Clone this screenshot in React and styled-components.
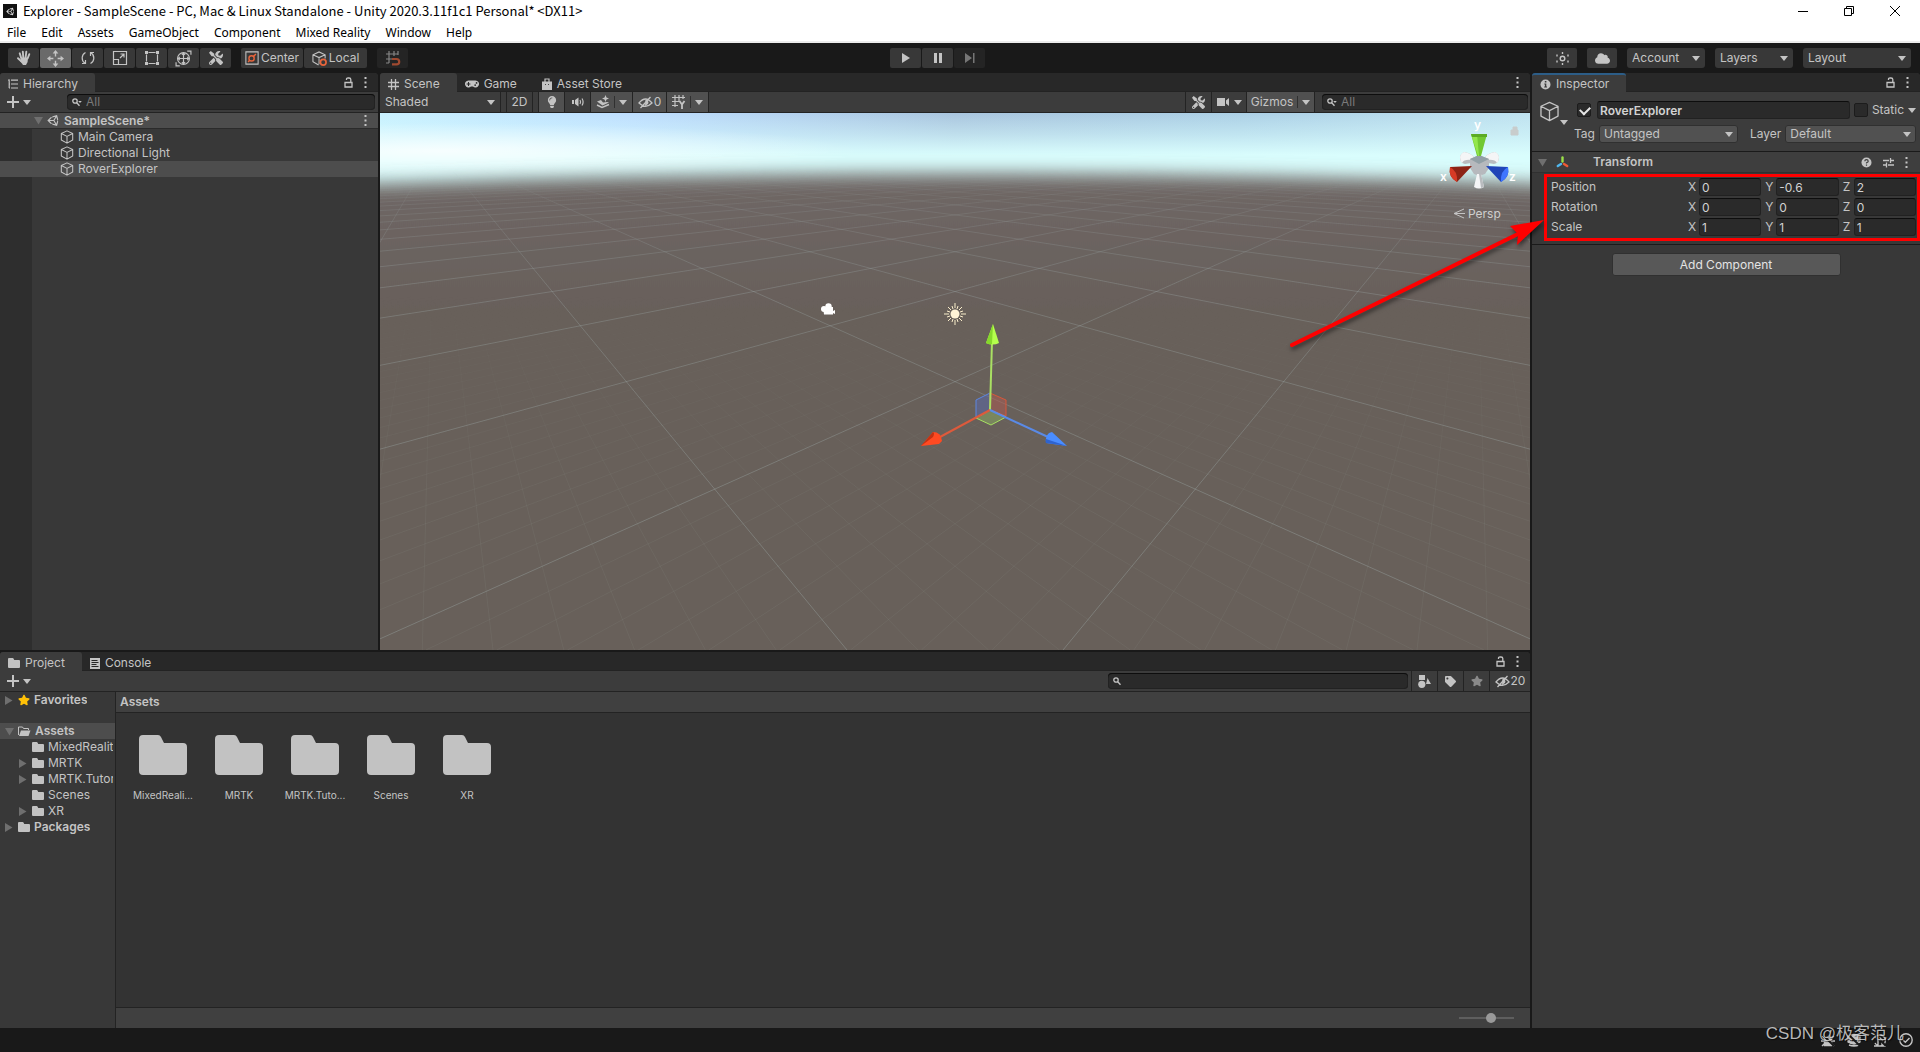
import React, { useState } from 'react';
import styled, { createGlobalStyle } from 'styled-components';
import { FaCloud, FaGamepad, FaLightbulb, FaStar, FaTag, FaTools, FaUnity } from 'react-icons/fa';

const GlobalStyle = createGlobalStyle`
  :root {
    --bg: #383838;
    --bg-dark: #191919;
    --bg-tabs: #282828;
    --bg-bar: #3c3c3c;
    --bg-field: #2a2a2a;
    --bg-active: #505050;
    --line: #232323;
    --text: #c4c4c4;
    --muted: #7a7a7a;
    --font: Inter, Roboto, "Liberation Sans", sans-serif;
    --font-title: "Noto Sans CJK SC", "Noto Sans", sans-serif;
    --font-menu: "Noto Sans", "Open Sans", sans-serif;
  }

  * { box-sizing: border-box; }

  body {
    margin: 0;
    overflow: hidden;
    background: var(--bg-dark);
  }

  button, input, select {
    font: inherit;
    color: inherit;
    margin: 0;
    padding: 0;
    border: 0;
    background: none;
    outline: none;
  }

  ul { list-style: none; margin: 0; padding: 0; }
  svg { display: block; flex-shrink: 0; }
`;

const Window = styled.div`
  display: flex;
  flex-direction: column;
  height: 100vh;
  background: var(--bg-dark);
  color: var(--text);
  font-family: var(--font);
  font-size: 12px;
  line-height: 16px;
`;

const TitleBar = styled.header`
  display: flex;
  align-items: center;
  height: 22px;
  padding: 0 2px 0 3px;
  background: #fff;
  color: #000;
  font-family: var(--font-title);
  font-size: 13px;
`;

const AppBadge = styled.span`
  display: flex;
  align-items: center;
  justify-content: center;
  width: 14px;
  height: 14px;
  margin-right: 6px;
  background: #111;
  color: #ddd;
`;

const WindowTitle = styled.span`
  flex: 1;
`;

const WindowButton = styled.button`
  display: flex;
  align-items: center;
  justify-content: center;
  width: 46px;
  height: 20px;
`;

const MenuBar = styled.nav`
  display: flex;
  gap: 15px;
  height: 21px;
  padding-left: 7px;
  background: #fff;
  border-bottom: 2px solid #ececec;
  color: #000;
  font-family: var(--font-menu);
`;

const MenuItem = styled.button`
  height: 20px;
  line-height: 20px;
  padding-top: 1px;
`;

const MainToolbar = styled.div`
  display: flex;
  align-items: center;
  height: 30px;
  padding: 0 9px 0 8px;
`;

const ToolSide = styled.div`
  flex: 1;
  display: flex;
  justify-content: ${props => (props.$end ? 'flex-end' : 'flex-start')};
  gap: 10px;
`;

const ButtonGroup = styled.div`
  display: flex;
  gap: 1px;
`;

const PlayControls = styled(ButtonGroup)`
  margin-right: 44px;
`;

const ToolButton = styled.button`
  display: flex;
  align-items: center;
  justify-content: center;
  gap: 2px;
  width: ${props => props.$width || 31}px;
  height: 20px;
  border-radius: 2px;
  background: ${props => (props.$active ? '#6a6a6a' : props.$dim ? '#242424' : '#383838')};
  color: ${props => (props.$dim ? '#767676' : '#c4c4c4')};
`;

const SelectBox = styled.span`
  position: relative;
  display: inline-flex;
  align-items: center;
  flex: ${props => (props.$grow ? '1 1 0' : '0 0 auto')};
  width: ${props => (props.$width ? `${props.$width}px` : 'auto')};
  min-width: 0;
  height: ${props => props.$height || 20}px;
  border-radius: ${props => (props.$flat ? 0 : 3)}px;
  background: ${props => (props.$flat ? 'transparent' : props.$raised ? '#515151' : '#383838')};
  box-shadow: ${props => (props.$raised ? 'inset 0 0 0 1px #303030' : 'none')};

  select {
    appearance: none;
    width: 100%;
    height: 100%;
    padding: 0 20px 0 5px;
  }

  svg {
    position: absolute;
    right: 5px;
    pointer-events: none;
  }
`;

const Workspace = styled.main`
  flex: 1;
  display: grid;
  grid-template-columns: minmax(0, 1fr) 388px;
  gap: 2px;
  min-height: 0;
`;

const LeftDock = styled.div`
  display: grid;
  grid-template-rows: minmax(0, 577fr) minmax(0, 376fr);
  gap: 2px;
  min-height: 0;
`;

const TopDock = styled.div`
  display: grid;
  grid-template-columns: 378px minmax(0, 1fr);
  gap: 2px;
  min-height: 0;
`;

const Panel = styled.section`
  display: flex;
  flex-direction: column;
  min-width: 0;
  min-height: 0;
  background: var(--bg);
  border-radius: 4px 4px 0 0;
`;

const TabStrip = styled.div`
  display: flex;
  height: 19px;
  flex-shrink: 0;
  background: var(--bg-tabs);
  border-bottom: 1px solid var(--line);
  border-radius: 4px 4px 0 0;
`;

const Tab = styled.button`
  display: flex;
  align-items: center;
  gap: 5px;
  height: 19px;
  padding: ${props => (props.$focused ? 1 : 3)}px 17px 0 8px;
  border-radius: 3px 3px 0 0;
  border-top: ${props => (props.$focused ? '2px solid #2c5d87' : '0')};
  background: ${props => (props.$active ? 'var(--bg-bar)' : 'transparent')};
`;

const TabActions = styled.div`
  display: flex;
  align-items: center;
  gap: 11px;
  margin-left: auto;
  padding-right: 11px;
`;

const IconButton = styled.button`
  display: flex;
  align-items: center;
  gap: 4px;
`;

const PanelBar = styled.div`
  display: flex;
  align-items: center;
  height: 21px;
  flex-shrink: 0;
  padding-left: ${props => props.$left || 0}px;
  background: var(--bg-bar);
  border-bottom: 1px solid var(--line);
`;

const BarButton = styled.button`
  display: flex;
  align-items: center;
  justify-content: center;
  gap: ${props => props.$gap || 1}px;
  width: ${props => props.$width || 26}px;
  height: 20px;
  border-left: 1px solid var(--line);
  background: ${props => (props.$active ? 'var(--bg-active)' : 'transparent')};
`;

const BarGap = styled.span`
  width: 6px;
  height: 20px;
  border-left: 1px solid var(--line);
`;

const Divider = styled.span`
  width: 1px;
  height: 12px;
  margin: 0 3px;
  background: #303030;
`;

const Spacer = styled.span`
  flex: 1;
  ${props => props.$edge && 'align-self: stretch; border-left: 1px solid var(--line);'}
`;

const SearchBox = styled.label`
  display: flex;
  align-items: center;
  gap: 4px;
  flex: 0 0 auto;
  width: ${props => props.$width}px;
  height: 16px;
  margin: 0 ${props => props.$gap || 3}px;
  padding-left: 5px;
  border-radius: 4px;
  background: var(--bg-field);
  box-shadow: inset 0 1px 0 #0d0d0d, inset 0 0 0 1px #222;

  input { flex: 1; min-width: 0; }
  input::placeholder { color: var(--muted); opacity: 1; }
`;

/* hierarchy */

const HierarchyList = styled.ul`
  flex: 1;
  background: linear-gradient(90deg, #2e2e2e 32px, var(--bg) 32px);
`;

const HierarchyRow = styled.li`
  display: flex;
  align-items: center;
  gap: 4px;
  height: 16px;
  padding: 0 11px 0 ${props => (props.$root ? 34 : 60)}px;
  font-weight: ${props => (props.$root ? 600 : 400)};
  background: ${props => (props.$root || props.$selected ? '#4d4d4d' : 'transparent')};
  border-bottom: ${props => (props.$root ? '1px solid #2b2b2b' : '0')};
`;

/* scene */

const SceneView = styled.div`
  position: relative;
  flex: 1;
  min-height: 0;
  overflow: hidden;

  > svg { width: 100%; height: 100%; }
`;

const OrientationGizmo = styled.div`
  position: absolute;
  top: 3px;
  right: 5px;
`;

/* inspector */

const ObjectHeader = styled.div`
  display: flex;
  gap: 8px;
  padding: 9px 4px 8px 7px;
  background: var(--bg-bar);
  border-bottom: 1px solid #1a1a1a;
`;

const ObjectIcon = styled.div`
  display: flex;
  align-items: flex-end;
  width: 26px;
  height: 24px;

  svg:first-child { align-self: flex-start; }
`;

const HeaderRows = styled.div`
  flex: 1;
  display: flex;
  flex-direction: column;
  gap: 6px;
`;

const HeaderRow = styled.div`
  display: flex;
  align-items: center;
  height: 18px;
  padding-left: ${props => (props.$indent ? 1 : 4)}px;
  gap: 4px;

  label { white-space: nowrap; }
`;

const LayerLabel = styled.label`
  padding-left: 8px;
`;

const Checkbox = styled.input.attrs({ type: 'checkbox' })`
  appearance: none;
  position: relative;
  flex-shrink: 0;
  width: 14px;
  height: 14px;
  border: 1px solid #1c1c1c;
  border-radius: 2px;
  background: var(--bg-field);

  &:checked::after {
    content: '';
    position: absolute;
    left: 2px;
    top: 2px;
    width: 8px;
    height: 5px;
    border: solid #e6e6e6;
    border-width: 0 0 2px 2px;
    transform: rotate(-45deg);
  }
`;

const TextField = styled.input`
  flex: 1;
  min-width: 0;
  height: 18px;
  padding: 0 2px;
  border: 1px solid #212121;
  border-top-color: #0d0d0d;
  border-radius: 3px;
  background: var(--bg-field);
  color: #d2d2d2;
  font-weight: ${props => (props.$bold ? 600 : 400)};
`;

const NameField = styled(TextField)`
  margin: 0 0 0 2px;
`;

const ComponentHeader = styled.div`
  display: flex;
  align-items: center;
  height: 21px;
  padding: 0 12px 0 6px;
  background: #3e3e3e;
  border-bottom: 1px solid #303030;
  font-weight: 600;
`;

const ComponentTitle = styled.span`
  flex: 1;
  padding-left: 24px;
`;

const TransformBody = styled.div`
  position: relative;
  padding: 4px 4px 7px 19px;
  border-bottom: 1px solid #1a1a1a;
`;

const VectorRow = styled.div`
  display: grid;
  grid-template-columns: 133px repeat(3, minmax(0, 1fr));
  column-gap: 4px;
  align-items: center;
  height: 20px;
`;

const AxisField = styled.label`
  display: flex;
  align-items: center;
  min-width: 0;

  span { width: 11px; }
`;

const AddRow = styled.div`
  display: flex;
  justify-content: center;
  padding: 8px 0;
`;

const AddButton = styled.button`
  width: 229px;
  height: 23px;
  border: 1px solid #303030;
  border-radius: 3px;
  background: #585858;
  color: #e4e4e4;
`;

const Highlight = styled.div`
  position: absolute;
  inset: 1px 0 3px 12px;
  border: 3px solid #fe0000;
  pointer-events: none;
`;

const Arrow = styled.svg`
  position: absolute;
  top: 36px;
  right: 376px;
  z-index: 5;
  pointer-events: none;
  filter: drop-shadow(1px 3px 2px rgba(0, 0, 0, 0.5));
`;

/* project */

const ProjectBody = styled.div`
  flex: 1;
  display: grid;
  grid-template-columns: 116px minmax(0, 1fr);
  min-height: 0;
`;

const Tree = styled.ul`
  border-right: 1px solid var(--line);
  overflow: hidden;
`;

const TreeRow = styled.li`
  display: flex;
  align-items: center;
  gap: 4px;
  height: 16px;
  margin-bottom: ${props => (props.$spaced ? 15 : 0)}px;
  padding: 0 2px 0 ${props => (props.$depth ? 19 : 5)}px;
  font-weight: ${props => (props.$depth ? 400 : 600)};
  background: ${props => (props.$selected ? '#4d4d4d' : 'transparent')};
`;

const TreeLabel = styled.span`
  min-width: 0;
  overflow: hidden;
  white-space: nowrap;
`;

const Twisty = styled.span`
  width: 9px;
  flex-shrink: 0;
`;

const AssetPane = styled.div`
  display: flex;
  flex-direction: column;
  background: #333;
`;

const Breadcrumb = styled.div`
  height: 21px;
  padding: 2px 4px;
  background: #404040;
  border-bottom: 1px solid var(--line);
  font-weight: 600;
`;

const AssetGrid = styled.ul`
  flex: 1;
  display: flex;
  flex-wrap: wrap;
  align-content: flex-start;
  gap: 12px;
  padding: 22px 15px;
`;

const AssetTile = styled.li`
  display: flex;
  flex-direction: column;
  align-items: center;
  gap: 12px;
  width: 64px;
  font-size: 10px;
`;

const AssetFooter = styled.div`
  display: flex;
  align-items: center;
  justify-content: flex-end;
  height: 21px;
  padding-right: 16px;
  background: #404040;
  border-top: 1px solid var(--line);
`;

const ZoomSlider = styled.input.attrs({ type: 'range' })`
  appearance: none;
  width: 55px;
  height: 2px;
  background: #5e5e5e;

  &::-webkit-slider-thumb {
    appearance: none;
    width: 10px;
    height: 10px;
    border-radius: 50%;
    background: #999;
  }
`;

const StatusBar = styled.footer`
  position: relative;
  display: flex;
  align-items: center;
  justify-content: flex-end;
  gap: 12px;
  height: 24px;
  padding-right: 7px;
`;

const Watermark = styled.span`
  position: absolute;
  right: 16px;
  bottom: 6px;
  color: rgba(214, 214, 214, 0.85);
  font-family: "Liberation Sans", "Noto Sans CJK SC", sans-serif;
  font-size: 17px;
  line-height: 24px;
  text-shadow: 1px 1px 1px rgba(0, 0, 0, 0.6);
`;

/* icons */

const Svg = ({ w = 16, h, box = 16, boxH, children, ...rest }) => (
  <svg width={w} height={h || w} viewBox={`0 0 ${box} ${boxH || box}`} fill="none" stroke="currentColor" aria-hidden="true" {...rest}>
    {children}
  </svg>
);

const Caret = ({ color = 'currentColor' }) => (
  <Svg w={8} h={5} box={8} boxH={5} stroke="none"><path d="M0 0h8L4 5z" fill={color} /></Svg>
);

const Fold = ({ open }) => (
  <Svg w={9} box={9} stroke="none">
    <path d={open ? 'M0 1h9L4.500 8.500z' : 'M0 0v9l7.500-4.500z'} fill="#6f6f6f" />
  </Svg>
);

const Dots = () => (
  <Svg w={3} h={11} box={3} boxH={11} stroke="none">
    <path d="M.5 0h2v2h-2zM.5 4.500h2v2h-2zM.5 9h2v2h-2z" fill="currentColor" />
  </Svg>
);

const Lock = () => (
  <Svg w={9} h={11} box={9} boxH={11} strokeWidth="1.300">
    <path d="M1 5.500h7v4.500H1zM2.500 3V2.200Q2.500 1 4 1h1Q6.800 1 6.800 2.500v3" />
  </Svg>
);

const Cube = ({ size = 14 }) => (
  <Svg w={size} box={16} strokeWidth={size > 16 ? 1 : 1.200} strokeLinejoin="round">
    <path d="M8 1l6.500 3v7.500L8 15 1.500 11.500V4zM1.500 4L8 7.300 14.500 4M8 7.300V15" />
  </Svg>
);

const Plus = () => (
  <Svg w={12} box={12} strokeWidth="2"><path d="M6 0v12M0 6h12" /></Svg>
);

const Search = ({ menu }) => (
  <Svg w={10} box={10} strokeWidth="1.300">
    <circle cx="3" cy="4" r="2.200" />
    <path d="M4.700 5.700L7.500 8.800" />
    {menu && <path d="M6.200 4h3.600L8 6z" fill="currentColor" stroke="none" />}
  </Svg>
);

const Folder = ({ w = 12, h = 10 }) => (
  <Svg w={w} h={h} box={48} boxH={40} stroke="none" preserveAspectRatio="none">
    <path d="M4 0h15q2 0 3 2l3 6h19q4 0 4 4v24q0 4-4 4H4q-4 0-4-4V4q0-4 4-4z" fill="#c2c2c2" />
  </Svg>
);

const FolderOpen = () => (
  <Svg w={13} h={10} box={13} boxH={10} strokeWidth="1">
    <path d="M.5 9V1h4l1 1.500h5V4" />
    <path d="M3 4.500h9.500L10.500 10H1z" fill="currentColor" stroke="none" />
  </Svg>
);

const Hand = () => (
  <Svg strokeLinecap="round" strokeWidth="1.900">
    <path d="M5.200 8L3.700 3.300M7.300 7.500L6.800 1.600M9.600 7.500l.7-5.700M11.600 8.500l1.700-4.300M5.500 11.500L2 8.200" />
    <path d="M4.800 7.500h7.200l-.4 4.500-1.600 3H7l-2.500-3.500z" fill="currentColor" stroke="none" />
  </Svg>
);

const Move = () => (
  <Svg w={17} strokeWidth="1.300">
    <path d="M8 6V2M8 10v4M6 8H2M10 8h4" />
    <path d="M8 0l2.700 3.200H5.300zM8 16l2.700-3.200H5.300zM0 8l3.200-2.700v5.400zM16 8l-3.200-2.700v5.400z" fill="currentColor" stroke="none" />
  </Svg>
);

const Rotate = () => (
  <Svg strokeWidth="1.200">
    <path d="M5.500 2.500A6.200 6.200 0 0 0 5 13.200M10.500 13.500A6.200 6.200 0 0 0 11 2.800M2 13.500h3.500V10M14 2.500h-3.500V6" />
  </Svg>
);

const Scale = () => (
  <Svg strokeWidth="1.200">
    <path d="M1.500 1.500h13v13h-13zM1.500 9.500h5v5M8 8l4-4M8.500 4H12v3.500" />
  </Svg>
);

const RectTool = () => (
  <Svg strokeWidth="1.200">
    <path d="M4.500 2.500h7M4.500 13.500h7M2.500 4.500v7M13.500 4.500v7" />
    <path d="M1 1h3v3H1zM12 1h3v3h-3zM1 12h3v3H1zM12 12h3v3h-3z" fill="currentColor" stroke="none" />
  </Svg>
);

const TransformTool = () => (
  <Svg w={17} strokeWidth="1.100">
    <circle cx="8" cy="8" r="5.600" />
    <path d="M8 3v10M3 8h10M6.500 4.500L8 3l1.500 1.500M6.500 11.500L8 13l1.500-1.500M4.500 6.500L3 8l1.500 1.500M11.500 6.500L13 8l-1.500 1.500M11.500 1h3.500v3.500M4.500 15H1v-3.500" />
  </Svg>
);

const Pivot = () => (
  <Svg w={14} strokeWidth="1.200">
    <path d="M1 1h14v14H1z" />
    <g stroke="#e8653c" strokeWidth="1.600"><circle cx="7.500" cy="8.500" r="3" /><path d="M9.600 6.400L12.500 3.500M5.400 10.600L3.500 12.500" /></g>
  </Svg>
);

const LocalCube = () => (
  <Svg w={15} strokeWidth="1.100">
    <path d="M7 15L1 11.500V4L7.500 1 14 4v4M1 4l6.500 3L14 4M7.500 7v7" />
    <circle cx="12" cy="12" r="3" stroke="#e8653c" strokeWidth="1.800" />
  </Svg>
);

const Snap = () => (
  <Svg strokeWidth="1.200">
    <path d="M1 4h12M1 9h6M4 1v12M9 1v5M13 1v4M1 13h3" stroke="#858585" />
    <path d="M7 9h4.500a2.700 2.700 0 0 1 0 5.400H7" stroke="#a04a30" strokeWidth="2.200" />
  </Svg>
);

const Hash = ({ size = 11 }) => (
  <Svg w={size} box={11} strokeWidth="1.300"><path d="M3.500 0v11M7.500 0v11M0 3.500h11M0 7.500h11" /></Svg>
);

const HierarchyIcon = () => (
  <Svg w={10} box={10} strokeWidth="1.200"><path d="M0 1.200h2M3 1.200h7M3 5h7M3 9h7M1.200 2v7M1 5h1M1 9h1" /></Svg>
);

const Bag = () => (
  <Svg w={10} h={12} box={10} boxH={12} strokeWidth="1.200">
    <path d="M3 4V1h4v3" />
    <path d="M0 3.500h10V12H0z" fill="currentColor" stroke="none" />
    <path d="M3 6.500h.8M6.200 6.500H7" stroke="#282828" />
  </Svg>
);

const Speaker = () => (
  <Svg w={14} box={14} strokeWidth="1.200">
    <path d="M1 5h2v4H1zM4 5l3.500-2.500v9L4 9z" fill="currentColor" stroke="none" />
    <path d="M9 5q1.200 2 0 4M11 3.500q2.200 3.500 0 7" />
  </Svg>
);

const Effects = () => (
  <Svg w={14} box={14} strokeWidth="1.400">
    <path d="M1 10l5 2.500L13 9.500" />
    <path d="M1 6.500l4-1.500 2 2.500 4-.5 2 .5-6.500 3z" fill="currentColor" stroke="none" />
    <path d="M9.500 0l1 2.500L13 3.500l-2.500 1-1 2.500-1-2.500L6 3.500l2.500-1z" fill="currentColor" stroke="none" />
  </Svg>
);

const EyeOff = () => (
  <Svg w={15} h={13} box={15} boxH={13} strokeWidth="1.300">
    <path d="M1 7q6.500-8 13 0-6.500 6.500-13 0zM12.500 1L2.500 12" />
    <path d="M7.500 3.500a3 3 0 0 1 2.500 4.500L7 10z" fill="currentColor" stroke="none" />
  </Svg>
);

const GridY = () => (
  <Svg w={14} box={14} strokeWidth="1.200">
    <path d="M3 0v12M7 0v7M11 0v4M0 2.500h13M0 6.500h7M0 10.500h6" />
    <path d="M7.500 6l2.500 3.500L12.500 6M10 9.500V14" strokeWidth="1.800" />
  </Svg>
);

const Camera = () => (
  <Svg w={13} h={10} box={13} boxH={10} stroke="none">
    <path d="M0 1h8v8H0zM9 3.500L12 1v8L9 6.500z" fill="currentColor" />
  </Svg>
);

const Sun = () => (
  <Svg w={13} box={13} strokeWidth="1.400">
    <circle cx="6.500" cy="6.500" r="2.300" />
    <path d="M6.500 0v2M6.500 11v2M1 2.500v2M12 2.500v2M1 8.500v2M12 8.500v2" />
  </Svg>
);

const Info = ({ mark = 'i' }) => (
  <Svg w={11} box={11} stroke="none">
    <circle cx="5.500" cy="5.500" r="5" fill="currentColor" />
    {mark === 'i'
      ? <path d="M4.800 2h1.600v1.500H4.800zM4.300 4.500h2v3h.7v1H4.200v-1h.7v-2h-.6z" fill="#3c3c3c" />
      : <path d="M3.800 4.300q0-1.700 1.700-1.700t1.700 1.600q0 1-1.700 1.600v.7M5.500 7.500v1.200" stroke="#3e3e3e" strokeWidth="1.200" />}
  </Svg>
);

const Preset = () => (
  <Svg w={11} box={11} strokeWidth="1.300"><path d="M0 3.500h6M8 3.500h3M7.500 1v5M0 8h3M5 8h6M3.500 5.500v5" /></Svg>
);

const AxisIcon = () => (
  <Svg w={13} h={12} box={13} boxH={12} strokeWidth="2.400" strokeLinecap="round">
    <path d="M6.500 1.500v4" stroke="#9be04a" />
    <path d="M5 8L1.800 10" stroke="#4fb7ee" />
    <path d="M8 8l3.200 2" stroke="#ee5b35" />
  </Svg>
);

const ConsoleIcon = () => (
  <Svg w={10} h={11} box={10} boxH={11} stroke="none">
    <path d="M0 0h10v11H0z" fill="currentColor" />
    <path d="M1.500 2.500h6M1.500 4.500h7M1.500 6.500h5M1.500 8.500h7" stroke="#282828" />
  </Svg>
);

const Shapes = () => (
  <Svg w={13} box={13} stroke="none">
    <path d="M1 0h6v5H1zM9.500 3l3.500 6H8z" fill="currentColor" />
    <circle cx="3.800" cy="9.300" r="3.600" fill="currentColor" />
  </Svg>
);

const StatusIcon = ({ kind }) => (
  <Svg w={14} box={14} strokeWidth="1.400">
    {kind === 'bug' && <path d="M3.500 4.500h7v8h-7zM1 3l3 3M13 3l-3 3M0 8h14M1 13l3-3M13 13l-3-3" fill="currentColor" />}
    {kind === 'cache' && <path d="M1 3q6-3 12 0v2q-6 3-12 0zM1 7q6 4 12 0v2q-6 4-12 0zM2 12q5 2 10 0" fill="currentColor" />}
    {kind === 'auto' && <path d="M2 5a5.500 5.500 0 1 1 0 5M5 12V7l2-2 2 2v5M1 13h12" />}
    {kind === 'ok' && <><circle cx="7" cy="7" r="6.200" /><path d="M4 7l2.300 2.300L10.500 5" /></>}
    {kind !== 'ok' && <path d="M1 1l12 12" stroke="#191919" strokeWidth="2" />}
  </Svg>
);

/* scene drawing: ground lines all run to one of two vanishing points on the horizon */

const HORIZON = 36;
const CENTER = 575;
const SPREAD = 520;
const SLOPE = 0.7065;
const OFFSET = 2.164;
const FLOOR = 537;

const groundLines = (from, to, step) => {
  const lines = [];
  for (let c = from; c <= to; c += step) {
    const dx = (c + OFFSET) * SLOPE * (FLOOR - HORIZON);
    lines.push(`M${CENTER - SPREAD} ${HORIZON}L${(CENTER - SPREAD + dx).toFixed(1)} ${FLOOR}`);
    lines.push(`M${CENTER + SPREAD} ${HORIZON}L${(CENTER + SPREAD - dx).toFixed(1)} ${FLOOR}`);
  }
  return lines.join('');
};

const coarseGrid = groundLines(-45, 45, 2);
const fineGrid = groundLines(-9, 9, 0.2);

function SceneDrawing() {
  return (
    <svg viewBox="0 0 1150 537" preserveAspectRatio="xMidYMid slice" role="img" aria-label="Scene view">
      <defs>
        <linearGradient id="skyTop">
          <stop offset="0" stopColor="#c9f1ff" />
          <stop offset="0.22" stopColor="#bedeff" />
          <stop offset="0.5" stopColor="#a9c5de" />
          <stop offset="0.75" stopColor="#acd0e6" />
          <stop offset="1" stopColor="#bfe2f0" />
        </linearGradient>
        <linearGradient id="skyLow" x2="0" y2="1">
          <stop offset="0" stopColor="#d9fdfd" stopOpacity="0" />
          <stop offset="0.35" stopColor="#d9fdfd" stopOpacity="0.45" />
          <stop offset="0.7" stopColor="#d9fdfd" />
        </linearGradient>
        <radialGradient id="glow" cx="0.5" cy="0.5" r="0.5">
          <stop offset="0" stopColor="#fff" stopOpacity="0.8" />
          <stop offset="1" stopColor="#fff" stopOpacity="0" />
        </radialGradient>
        <linearGradient id="ground" gradientUnits="userSpaceOnUse" x1="0" y1="60" x2="0" y2="200">
          <stop offset="0" stopColor="#6f6766" />
          <stop offset="1" stopColor="#68605a" />
        </linearGradient>
        <linearGradient id="coarseFade" gradientUnits="userSpaceOnUse" x1="0" y1="56" x2="0" y2="180">
          <stop offset="0" stopColor="#fff" stopOpacity="0" />
          <stop offset="0.3" stopColor="#fff" stopOpacity="0.5" />
          <stop offset="1" stopColor="#fff" />
        </linearGradient>
        <linearGradient id="fineFade" gradientUnits="userSpaceOnUse" x1="0" y1="180" x2="0" y2="400">
          <stop offset="0" stopColor="#fff" stopOpacity="0" />
          <stop offset="1" stopColor="#fff" />
        </linearGradient>
        <mask id="coarseMask" maskUnits="userSpaceOnUse" x="0" y="0" width="1150" height="537">
          <rect width="1150" height="537" fill="url(#coarseFade)" />
        </mask>
        <mask id="fineMask" maskUnits="userSpaceOnUse" x="0" y="0" width="1150" height="537">
          <rect width="1150" height="537" fill="url(#fineFade)" />
        </mask>
        <filter id="haze" filterUnits="userSpaceOnUse" x="-60" y="0" width="1270" height="640">
          <feGaussianBlur stdDeviation="0 9" />
        </filter>
      </defs>
      <rect width="1150" height="110" fill="url(#skyTop)" />
      <rect width="1150" height="60" fill="url(#skyLow)" />
      <rect y="60" width="1150" height="50" fill="#d9fdfd" />
      <ellipse cx="60" cy="38" rx="420" ry="28" fill="url(#glow)" />
      <path d="M-60 73Q575 48 1210 73V600H-60z" fill="url(#ground)" filter="url(#haze)" />
      <path d={fineGrid} stroke="#8f9a94" strokeOpacity="0.13" mask="url(#fineMask)" />
      <path d={coarseGrid} stroke="#a3b0ae" strokeOpacity="0.3" mask="url(#coarseMask)" />

      <g fill="#fff">
        <circle cx="444" cy="196" r="3" /><circle cx="448.500" cy="193.500" r="3.200" />
        <path d="M443 194h10v4l2-1v4l-2-1v1.500h-9z" />
      </g>
      <g transform="translate(575 201)">
        <path d="M0-11v5M0 6v5M-11 0h5M6 0h5" stroke="#b0a792" strokeWidth="2" />
        <path d="M-7-7l3 3M7-7L4-4M-7 7l3-3M7 7L4 4M-3-8l1 3M3-8L2-5M-3 8l1-3M3 8L2 5M-8-3l3 1M8-3L5-2M-8 3l3-1M8 3L5 2" stroke="#fbeecb" />
        <circle r="4.500" fill="#fff3d6" />
      </g>

      <g>
        <path d="M596 287l14-7v17l-14 8z" fill="#5a68a8" fillOpacity="0.55" stroke="#5c86e0" />
        <path d="M610 280l16 7v16l-16-6z" fill="#b05a50" fillOpacity="0.5" stroke="#d8573a" />
        <path d="M596 305l14-8 16 7-15 8z" fill="#86a060" fillOpacity="0.6" stroke="#a6e062" />
        <path d="M610 297L612 228" stroke="#a9e063" strokeWidth="2" />
        <path d="M610 297L560 324" stroke="#dd5a3c" strokeWidth="2" />
        <path d="M610 297L668 324" stroke="#5a8ae6" strokeWidth="2" />
        <path d="M613 211l6 19q-6 3-13 0z" fill="#b4ff4c" />
        <path d="M613 211l-7 19q3 2 6 1z" fill="#86d82c" />
        <path d="M541 333l12-14q8 0 9 9l-3 3z" fill="#ff4a22" />
        <path d="M541 333l12-14q2 1 0 5z" fill="#c23213" />
        <path d="M687 333l-15-14q-7 1-6 11z" fill="#4a8dff" />
        <path d="M687 333l-21-3q-1-2 0-4z" fill="#2e63cf" />
      </g>
    </svg>
  );
}

function Gizmo() {
  return (
    <OrientationGizmo>
      <svg width="92" height="108" viewBox="0 -4 92 108" fontFamily="Inter, sans-serif" role="img" aria-label="Orientation">
        <path d="M27 38q0-4 4-6 7 1 11 6l-4 5-6 1q-5-1-5-6zM66 38q0-4-4-6-7 1-11 6l4 5 6 1q5-1 5-6z" fill="#b9bcbf" />
        <path d="M27 37q1-4 4-5 7 1 11 6l-3 2q-8-1-10 3-2-2-2-6zM66 37q-1-4-4-5-7 1-11 6l3 2q8-1 10 3 2-2 2-6z" fill="#f4f5f6" />
        <path d="M37 39l9-4 10 4v9l-4 6-6 2-5-2-4-6z" fill="#b6b9bd" />
        <path d="M37 39l9-4 10 4-10 5z" fill="#92a0a6" />
        <path d="M38 14h16l-6 22h-4z" fill="#71c832" />
        <path d="M38 14h6l2 22h-1z" fill="#93e64c" />
        <path d="M38 14h16v3H39z" fill="#5cab25" />
        <path d="M17 47l22-1-15 16q-9-5-7-15z" fill="#8c2315" />
        <path d="M17 47q8 4 7 15-9-5-7-15z" fill="#d63a25" />
        <path d="M75 47l-22-1 15 16q9-5 7-15z" fill="#2045b8" />
        <path d="M75 47q-8 4-7 15 9-5 7-15z" fill="#3f76ff" />
        <path d="M44 54h4l3 13q-5 3-10 0z" fill="#f4f5f6" />
        <path d="M46 54h2l3 13-3 1z" fill="#b9bcbf" />
        <g fill="#fff" fontSize="12" fontWeight="600">
          <text x="41" y="9">y</text>
          <text x="7" y="61">x</text>
          <text x="76" y="61">z</text>
        </g>
        <path d="M78 10h7v5h-7zM80 10V7h4v3" fill="#c8cccc" stroke="#c8cccc" />
        <path d="M31 89L21 93.500 31 98M21 93.500h11" fill="none" stroke="#c4c4c4" />
        <text x="35" y="98" fill="#cfcfcf" fontSize="12">Persp</text>
      </svg>
    </OrientationGizmo>
  );
}

const MENUS = ['File', 'Edit', 'Assets', 'GameObject', 'Component', 'Mixed Reality', 'Window', 'Help'];

const TOOLS = [
  { name: 'Hand', icon: <Hand /> },
  { name: 'Move', icon: <Move /> },
  { name: 'Rotate', icon: <Rotate /> },
  { name: 'Scale', icon: <Scale /> },
  { name: 'Rect', icon: <RectTool /> },
  { name: 'Transform', icon: <TransformTool /> },
  { name: 'Custom', icon: <FaTools size={14} /> },
];

const OBJECTS = ['Main Camera', 'Directional Light', 'RoverExplorer'];

const TREE = [
  { name: 'Favorites', fold: 'closed', icon: <FaStar size={12} color="#ffc107" />, spaced: true },
  { name: 'Assets', fold: 'open', icon: <FolderOpen />, selected: true },
  { name: 'MixedRealityToolkit', depth: 1 },
  { name: 'MRTK', fold: 'closed', depth: 1 },
  { name: 'MRTK.Tutorials', fold: 'closed', depth: 1 },
  { name: 'Scenes', depth: 1 },
  { name: 'XR', fold: 'closed', depth: 1 },
  { name: 'Packages', fold: 'closed' },
];

const FOLDERS = ['MixedReali...', 'MRTK', 'MRTK.Tuto...', 'Scenes', 'XR'];

const TRANSFORM = {
  Position: ['0', '-0.6', '2'],
  Rotation: ['0', '0', '0'],
  Scale: ['1', '1', '1'],
};

function Dropdown({ label, options, ...rest }) {
  return (
    <SelectBox {...rest}>
      <select aria-label={label} id={label.toLowerCase()}>
        {options.map(o => <option key={o}>{o}</option>)}
      </select>
      <Caret />
    </SelectBox>
  );
}

function Toolbar() {
  const [tool, setTool] = useState('Move');

  return (
    <MainToolbar>
      <ToolSide>
        <ButtonGroup>
          {TOOLS.map(t => (
            <ToolButton key={t.name} aria-label={t.name} $active={tool === t.name} onClick={() => setTool(t.name)}>
              {t.icon}
            </ToolButton>
          ))}
        </ButtonGroup>
        <ButtonGroup>
          <ToolButton $width={62}><Pivot />Center</ToolButton>
          <ToolButton $width={63}><LocalCube />Local</ToolButton>
        </ButtonGroup>
        <ToolButton $dim aria-label="Snap"><Snap /></ToolButton>
      </ToolSide>
      <PlayControls>
        <ToolButton aria-label="Play"><Svg w={10} box={10} stroke="none"><path d="M1 0l8 5-8 5z" fill="currentColor" /></Svg></ToolButton>
        <ToolButton aria-label="Pause"><Svg w={10} box={10} stroke="none"><path d="M1 0h3v10H1zM6 0h3v10H6z" fill="currentColor" /></Svg></ToolButton>
        <ToolButton $dim aria-label="Step"><Svg w={10} box={10} stroke="none"><path d="M0 0l7 5-7 5zM8 0h1.500v10H8z" fill="currentColor" /></Svg></ToolButton>
      </PlayControls>
      <ToolSide $end>
        <ToolButton $width={30} aria-label="Services"><Sun /></ToolButton>
        <ToolButton $width={30} aria-label="Cloud"><FaCloud size={15} /></ToolButton>
        <Dropdown label="Account" options={['Account']} $width={78} />
        <Dropdown label="Layers" options={['Layers']} $width={78} />
        <Dropdown label="Layout" options={['Layout']} $width={108} />
      </ToolSide>
    </MainToolbar>
  );
}

function Hierarchy() {
  return (
    <Panel>
      <TabStrip>
        <Tab $active><HierarchyIcon />Hierarchy</Tab>
        <TabActions>
          <IconButton aria-label="Lock"><Lock /></IconButton>
          <IconButton aria-label="More"><Dots /></IconButton>
        </TabActions>
      </TabStrip>
      <PanelBar $left={7}>
        <IconButton aria-label="Create"><Plus /><Caret /></IconButton>
        <Spacer />
        <SearchBox $width={308}>
          <Search menu />
          <input placeholder="All" aria-label="Search hierarchy" />
        </SearchBox>
      </PanelBar>
      <HierarchyList>
        <HierarchyRow $root>
          <Fold open />
          <FaUnity size={13} />
          <Spacer>SampleScene*</Spacer>
          <IconButton aria-label="Scene menu"><Dots /></IconButton>
        </HierarchyRow>
        {OBJECTS.map(name => (
          <HierarchyRow key={name} $selected={name === 'RoverExplorer'}><Cube />{name}</HierarchyRow>
        ))}
      </HierarchyList>
    </Panel>
  );
}

function Scene() {
  return (
    <Panel>
      <TabStrip>
        <Tab $active><Hash />Scene</Tab>
        <Tab><FaGamepad size={14} />Game</Tab>
        <Tab><Bag />Asset Store</Tab>
        <TabActions><IconButton aria-label="More"><Dots /></IconButton></TabActions>
      </TabStrip>
      <PanelBar>
        <Dropdown label="Shading" options={['Shaded']} $width={120} $flat />
        <BarGap />
        <BarButton aria-pressed="false">2D</BarButton>
        <BarGap />
        <BarButton $active aria-label="Lighting"><FaLightbulb size={12} /></BarButton>
        <BarButton aria-label="Audio"><Speaker /></BarButton>
        <BarButton $active $width={42} aria-label="Effects"><Effects /><Divider /><Caret /></BarButton>
        <BarButton $active $width={34}><EyeOff />0</BarButton>
        <BarButton $active $width={42} aria-label="Grid"><GridY /><Divider /><Caret /></BarButton>
        <Spacer $edge />
        <BarButton aria-label="Tools"><FaTools size={13} /></BarButton>
        <BarButton $width={35} $gap={4} aria-label="Camera"><Camera /><Caret /></BarButton>
        <BarButton $active $width={68}>Gizmos<Divider /><Caret /></BarButton>
        <BarGap />
        <SearchBox $width={206} $gap={2}>
          <Search menu />
          <input placeholder="All" aria-label="Search scene" />
        </SearchBox>
      </PanelBar>
      <SceneView>
        <SceneDrawing />
        <Gizmo />
      </SceneView>
    </Panel>
  );
}

function Inspector() {
  const [values, setValues] = useState(TRANSFORM);

  const handleChange = (row, index, value) => {
    setValues(prev => ({ ...prev, [row]: prev[row].map((v, i) => (i === index ? value : v)) }));
  };

  return (
    <Panel>
      <TabStrip>
        <Tab $active $focused><Info />Inspector</Tab>
        <TabActions>
          <IconButton aria-label="Lock"><Lock /></IconButton>
          <IconButton aria-label="More"><Dots /></IconButton>
        </TabActions>
      </TabStrip>
      <ObjectHeader>
        <ObjectIcon><Cube size={21} /><Caret /></ObjectIcon>
        <HeaderRows>
          <HeaderRow>
            <Checkbox defaultChecked aria-label="Enabled" />
            <NameField $bold defaultValue="RoverExplorer" aria-label="Name" />
            <Checkbox id="static" />
            <label htmlFor="static">Static</label>
            <Caret />
          </HeaderRow>
          <HeaderRow $indent>
            <label htmlFor="tag">Tag</label>
            <Dropdown label="Tag" options={['Untagged']} $width={139} $height={18} $raised />
            <LayerLabel htmlFor="layer">Layer</LayerLabel>
            <Dropdown label="Layer" options={['Default']} $grow $height={18} $raised />
          </HeaderRow>
        </HeaderRows>
      </ObjectHeader>
      <ComponentHeader>
        <Fold open />
        <Twisty />
        <AxisIcon />
        <ComponentTitle>Transform</ComponentTitle>
        <TabActions>
          <Info mark="?" />
          <Preset />
        </TabActions>
        <Dots />
      </ComponentHeader>
      <TransformBody>
        {Object.keys(values).map(row => (
          <VectorRow key={row}>
            <span>{row}</span>
            {['X', 'Y', 'Z'].map((axis, i) => (
              <AxisField key={axis}>
                <span>{axis}</span>
                <TextField value={values[row][i]} onChange={e => handleChange(row, i, e.target.value)} />
              </AxisField>
            ))}
          </VectorRow>
        ))}
        <Highlight />
        <Arrow width="264" height="150" viewBox="0 0 264 150">
          <path d="M12 136L238 25" stroke="#fe0000" strokeWidth="4" strokeLinecap="round" />
          <path d="M264 11L230 17l8 8-1 11z" fill="#fe0000" />
        </Arrow>
      </TransformBody>
      <AddRow><AddButton>Add Component</AddButton></AddRow>
    </Panel>
  );
}

function Project() {
  return (
    <Panel>
      <TabStrip>
        <Tab $active><Folder />Project</Tab>
        <Tab><ConsoleIcon />Console</Tab>
        <TabActions>
          <IconButton aria-label="Lock"><Lock /></IconButton>
          <IconButton aria-label="More"><Dots /></IconButton>
        </TabActions>
      </TabStrip>
      <PanelBar $left={7}>
        <IconButton aria-label="Create"><Plus /><Caret /></IconButton>
        <Spacer />
        <SearchBox $width={300}>
          <Search />
          <input aria-label="Search assets" />
        </SearchBox>
        <BarButton aria-label="Filter by type"><Shapes /></BarButton>
        <BarButton aria-label="Filter by label"><FaTag size={11} /></BarButton>
        <BarButton aria-label="Save search"><FaStar size={12} color="#8a8a8a" /></BarButton>
        <BarButton $width={41}><EyeOff />20</BarButton>
      </PanelBar>
      <ProjectBody>
        <Tree>
          {TREE.map(item => (
            <TreeRow key={item.name} $depth={item.depth} $selected={item.selected} $spaced={item.spaced}>
              <Twisty>{item.fold && <Fold open={item.fold === 'open'} />}</Twisty>
              {item.icon || <Folder />}
              <TreeLabel>{item.name}</TreeLabel>
            </TreeRow>
          ))}
        </Tree>
        <AssetPane>
          <Breadcrumb>Assets</Breadcrumb>
          <AssetGrid>
            {FOLDERS.map(name => (
              <AssetTile key={name}><Folder w={48} h={40} />{name}</AssetTile>
            ))}
          </AssetGrid>
          <AssetFooter><ZoomSlider min="0" max="100" defaultValue="60" aria-label="Icon size" /></AssetFooter>
        </AssetPane>
      </ProjectBody>
    </Panel>
  );
}

export default function App() {
  return (
    <>
      <GlobalStyle />
      <Window>
        <TitleBar>
          <AppBadge><FaUnity size={9} /></AppBadge>
          <WindowTitle>Explorer - SampleScene - PC, Mac &amp; Linux Standalone - Unity 2020.3.11f1c1 Personal* &lt;DX11&gt;</WindowTitle>
          <WindowButton aria-label="Minimize"><Svg w={10} box={10}><path d="M0 5.500h10" /></Svg></WindowButton>
          <WindowButton aria-label="Restore"><Svg w={10} box={10}><path d="M.5 2.500h7v7h-7zM2.500 2.500v-2h7v7h-2" /></Svg></WindowButton>
          <WindowButton aria-label="Close"><Svg w={10} box={10}><path d="M0 0l10 10M10 0L0 10" /></Svg></WindowButton>
        </TitleBar>
        <MenuBar>
          {MENUS.map(m => <MenuItem key={m}>{m}</MenuItem>)}
        </MenuBar>
        <Toolbar />
        <Workspace>
          <LeftDock>
            <TopDock>
              <Hierarchy />
              <Scene />
            </TopDock>
            <Project />
          </LeftDock>
          <Inspector />
        </Workspace>
        <StatusBar>
          <StatusIcon kind="bug" />
          <StatusIcon kind="cache" />
          <StatusIcon kind="auto" />
          <StatusIcon kind="ok" />
          <Watermark>CSDN @极客范儿</Watermark>
        </StatusBar>
      </Window>
    </>
  );
}
